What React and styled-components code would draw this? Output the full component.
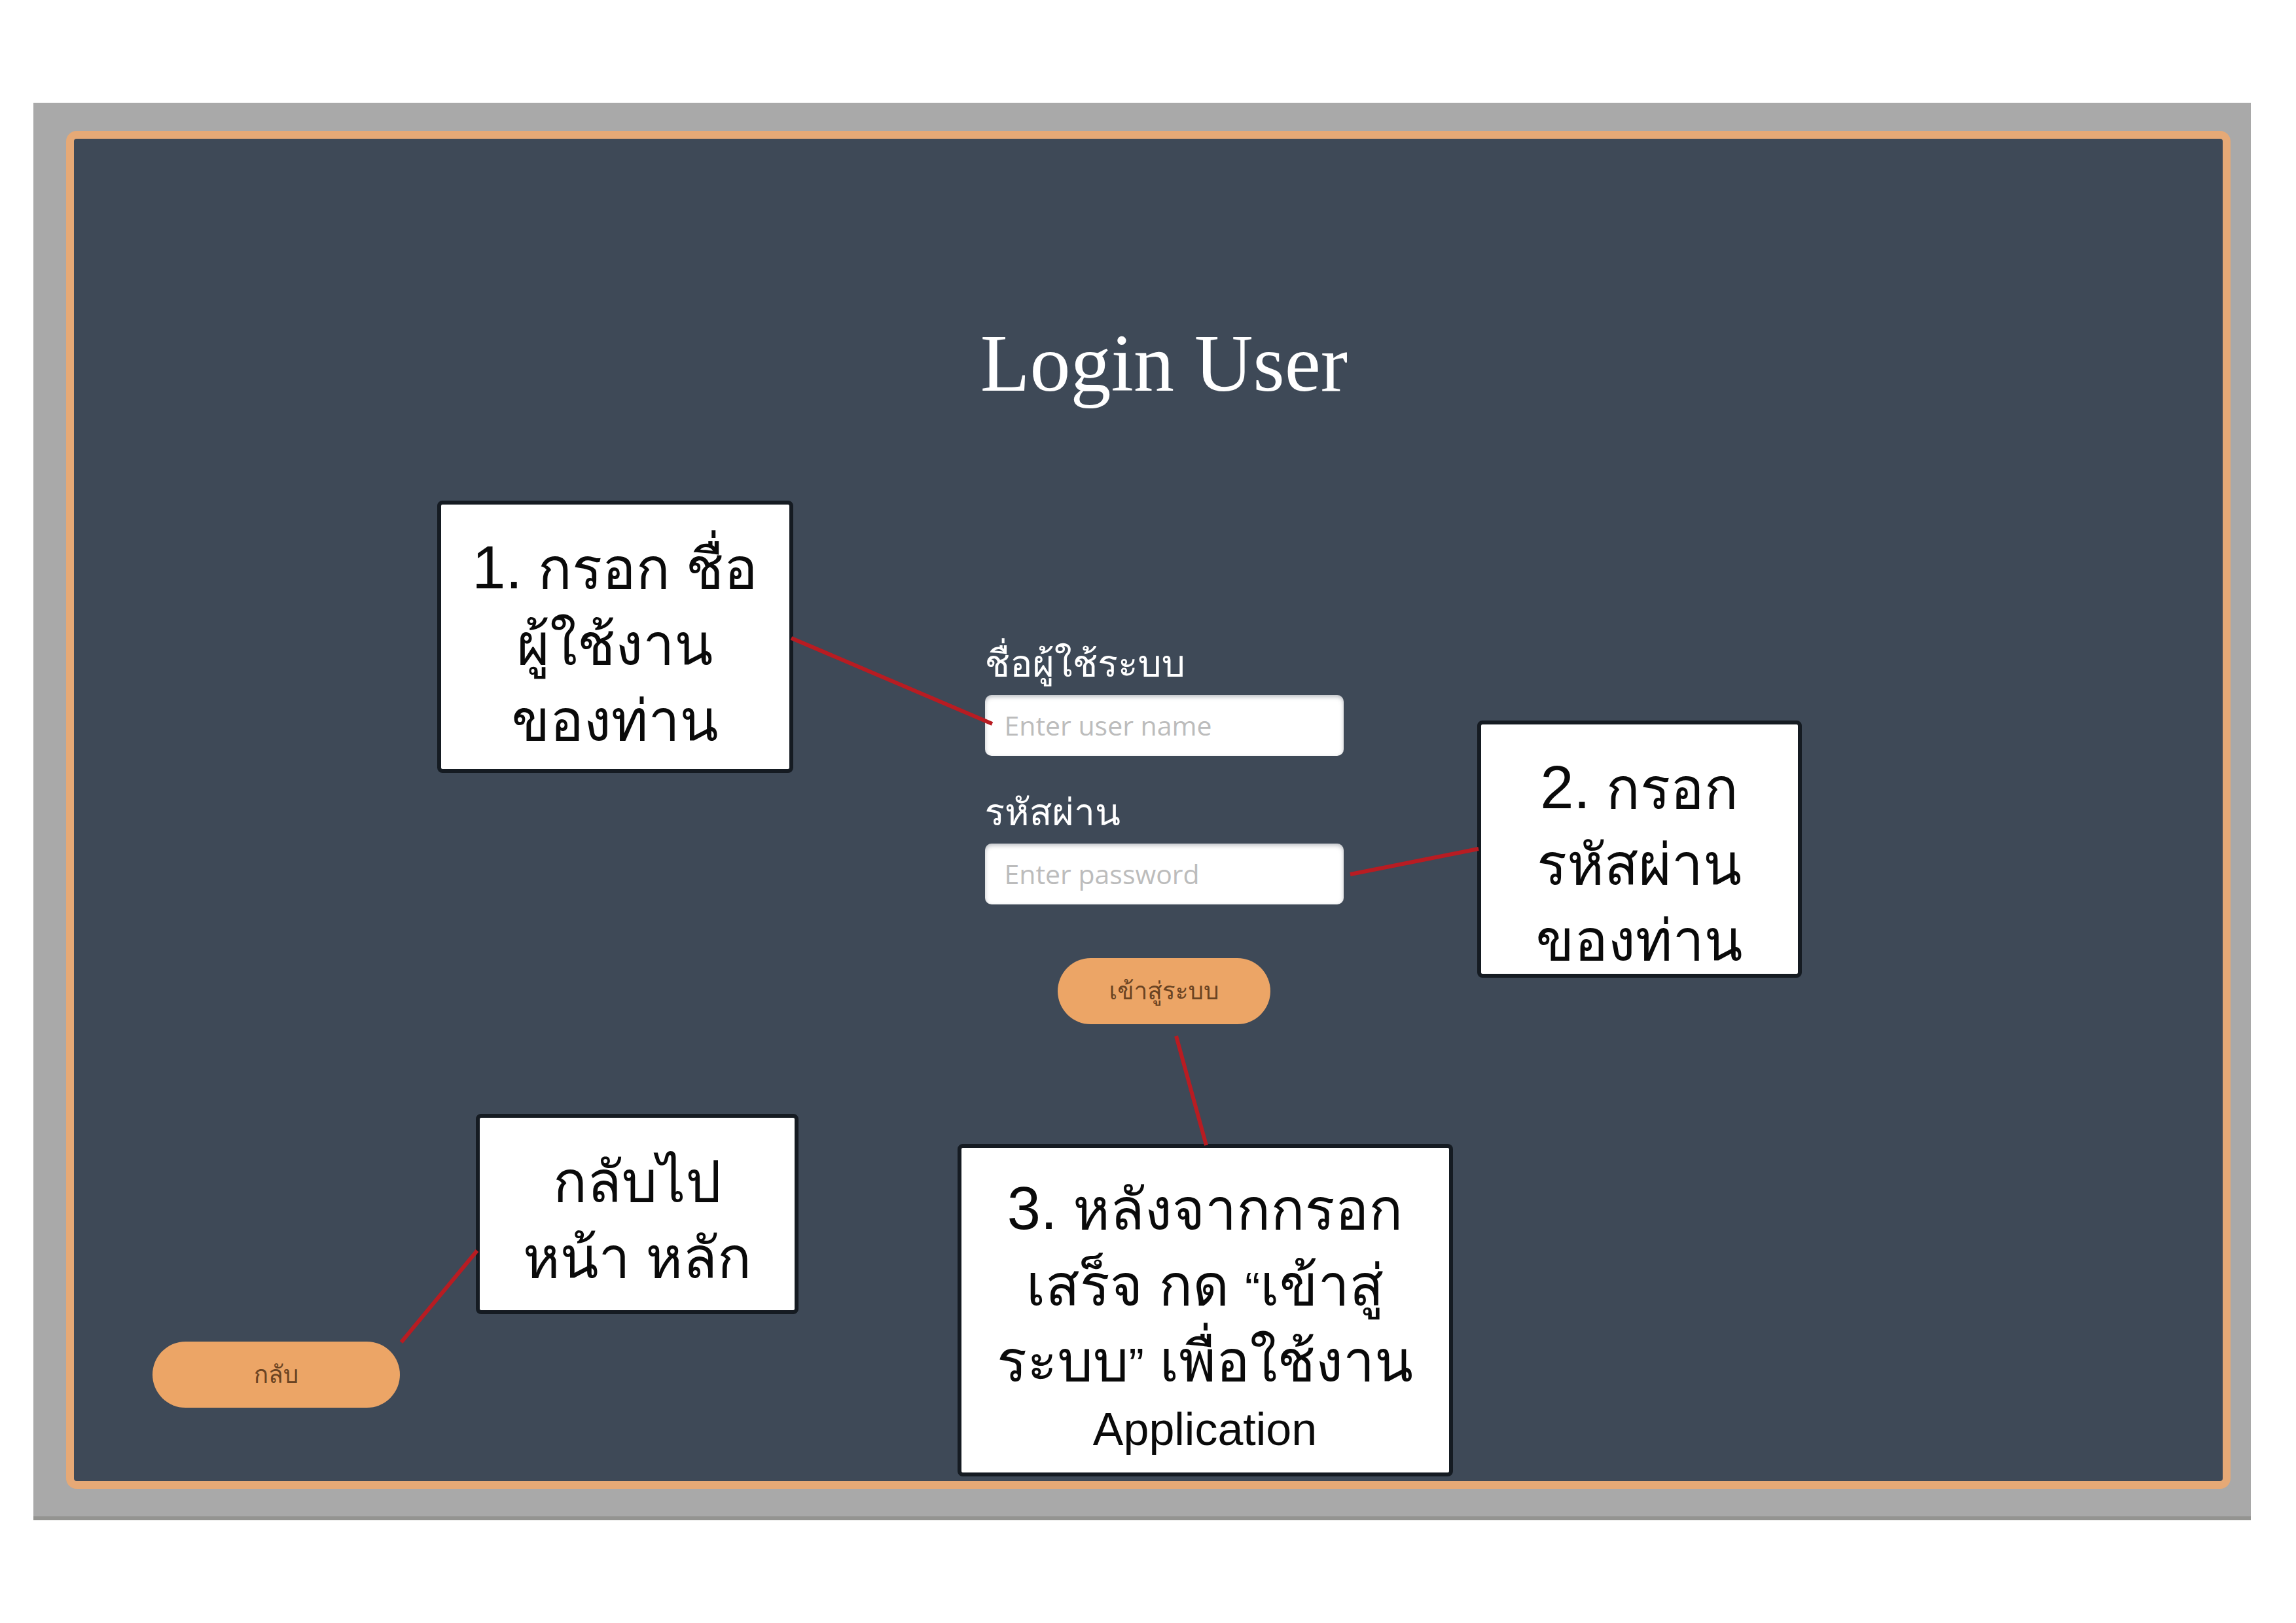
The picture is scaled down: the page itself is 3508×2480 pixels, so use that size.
import React from "react";
import styled, { createGlobalStyle } from "styled-components";

const GlobalStyle = createGlobalStyle`
  *, *::before, *::after { box-sizing: border-box; }
  body {
    margin: 0;
    background: #ffffff;
    font-family: "Liberation Sans", Loma, Garuda, "Noto Sans Thai Looped", "Leelawadee UI", Waree, "Noto Sans Thai", sans-serif;
  }
`;

const Page = styled.main`
  padding: 157px 69px 158px 51px;
`;

const Backdrop = styled.div`
  padding: 43px 31px 42px 50px;
  background: #a9a9a9;
  border-bottom: 6px solid #949491;
`;

const Panel = styled.section`
  display: flex;
  flex-direction: column;
  align-items: center;
  padding: 272px 72px 112px 120px;
  border: 12px solid #e6a976;
  border-radius: 16px;
  background: #3e4957;
`;

const Title = styled.h1`
  margin: 0 0 354px;
  color: #ffffff;
  font: 400 124px/144px "Liberation Serif", serif;
`;

const LoginForm = styled.form`
  position: relative;
  display: flex;
  flex-direction: column;
  gap: 54px;
  width: 548px;
`;

const Field = styled.div`
  display: flex;
  flex-direction: column;
  gap: 16px;
`;

const Label = styled.label`
  color: #ffffff;
  font-size: 57px;
  line-height: 64px;
  white-space: nowrap;
`;

const TextBox = styled.input`
  width: 100%;
  height: 93px;
  padding: 0 30px 2px;
  border: 0;
  border-radius: 10px;
  background: #ffffff;
  box-shadow: inset 0 3px 6px rgba(62, 73, 87, 0.35);
  color: #333333;
  font: 400 41px/56px "Open Sans", sans-serif;

  &::placeholder {
    color: #bcbcbc;
    opacity: 1;
  }
`;

const PillButton = styled.button`
  width: ${({ $width }) => $width}px;
  height: 101px;
  padding: 0;
  border: 0;
  border-radius: 51px;
  background: #eca566;
  color: #6a4322;
  font-family: inherit;
  font-size: 37px;
  line-height: 56px;
`;

const SubmitRow = styled.div`
  display: flex;
  justify-content: center;
  padding-top: 28px;
`;

const Footer = styled.footer`
  position: relative;
  align-self: stretch;
  display: flex;
  margin-top: 485px;
`;

const Note = styled.aside`
  position: absolute;
  left: ${({ $x }) => $x}px;
  top: ${({ $y }) => $y}px;
  width: ${({ $w }) => $w}px;
  height: ${({ $h }) => $h}px;
  padding-top: ${({ $pad = 40 }) => $pad}px;
  border: 6px solid #151b22;
  border-radius: 8px;
  background: #ffffff;
  color: #0a0a0a;
  text-align: center;
`;

const Line = styled.span`
  display: block;
  white-space: nowrap;
  font-size: ${({ $latin }) => ($latin ? 70 : 86)}px;
  line-height: ${({ $latin }) => ($latin ? 92 : 116)}px;
`;

const Step = styled.span`
  font-size: 92px;
  line-height: 1;
`;

const Quote = styled.span`
  font-size: 70px;
  line-height: 1;
`;

const Leaders = styled.svg`
  position: absolute;
  left: 0;
  top: 0;
  width: 1px;
  height: 1px;
  overflow: visible;
  pointer-events: none;
  stroke: #b81c22;
  stroke-width: 6;
`;

export default function App() {
  return (
    <Page>
      <GlobalStyle />
      <Backdrop>
        <Panel>
          <Title>Login User</Title>

          <LoginForm onSubmit={(e) => e.preventDefault()}>
            <Field>
              <Label htmlFor="username">ชื่อผู้ใช้ระบบ</Label>
              <TextBox id="username" type="text" placeholder="Enter user name" />
            </Field>
            <Field>
              <Label htmlFor="password">รหัสผ่าน</Label>
              <TextBox id="password" type="password" placeholder="Enter password" />
            </Field>
            <SubmitRow>
              <PillButton type="submit" $width={325}>เข้าสู่ระบบ</PillButton>
            </SubmitRow>

            <Note $x={-837} $y={-217} $w={544} $h={416}>
              <Line><Step>1.</Step> กรอก ชื่อ</Line>
              <Line>ผู้ใช้งาน</Line>
              <Line>ของท่าน</Line>
            </Note>
            <Note $x={752} $y={119} $w={496} $h={393}>
              <Line><Step>2.</Step> กรอก</Line>
              <Line>รหัสผ่าน</Line>
              <Line>ของท่าน</Line>
            </Note>
            <Note $x={-42} $y={766} $w={757} $h={508} $pad={36}>
              <Line><Step>3.</Step> หลังจากกรอก</Line>
              <Line>เสร็จ กด <Quote>“</Quote>เข้าสู่</Line>
              <Line>ระบบ<Quote>”</Quote> เพื่อใช้งาน</Line>
              <Line $latin>Application</Line>
            </Note>
            <Leaders aria-hidden="true">
              <line x1="-296" y1="-7" x2="11" y2="124" />
              <line x1="558" y1="354" x2="754" y2="315" />
              <line x1="292" y1="601" x2="338" y2="768" />
            </Leaders>
          </LoginForm>

          <Footer>
            <PillButton type="button" $width={378}>กลับ</PillButton>
            <Note $x={494} $y={-348} $w={493} $h={306}>
              <Line>กลับไป</Line>
              <Line>หน้า หลัก</Line>
            </Note>
            <Leaders aria-hidden="true">
              <line x1="380" y1="1" x2="496" y2="-139" />
            </Leaders>
          </Footer>
        </Panel>
      </Backdrop>
    </Page>
  );
}
